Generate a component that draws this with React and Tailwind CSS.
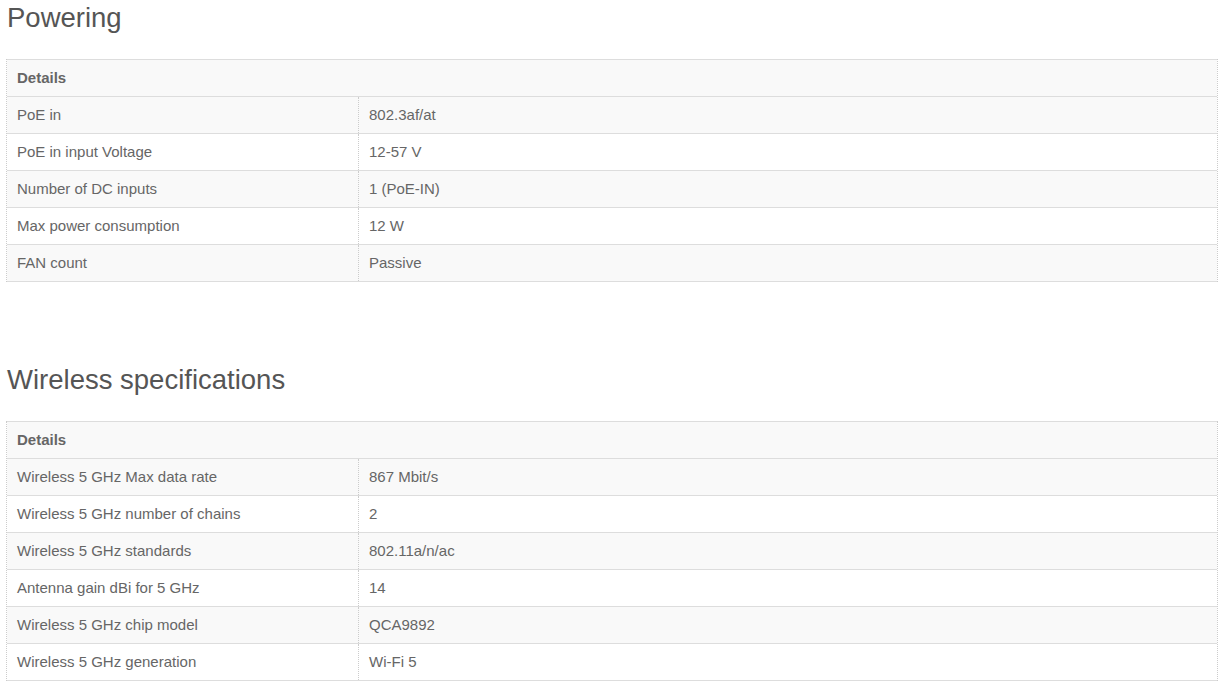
const powering = [
  ["PoE in", "802.3af/at"],
  ["PoE in input Voltage", "12-57 V"],
  ["Number of DC inputs", "1 (PoE-IN)"],
  ["Max power consumption", "12 W"],
  ["FAN count", "Passive"],
];

const wireless = [
  ["Wireless 5 GHz Max data rate", "867 Mbit/s"],
  ["Wireless 5 GHz number of chains", "2"],
  ["Wireless 5 GHz standards", "802.11a/n/ac"],
  ["Antenna gain dBi for 5 GHz", "14"],
  ["Wireless 5 GHz chip model", "QCA9892"],
  ["Wireless 5 GHz generation", "Wi-Fi 5"],
];

const SpecTable = ({ rows }) => {
  return (
    <div className="border-x border-dotted border-[#ccc]">
      <div className="h-[37px] flex items-center px-[10px] border-t border-[#ddd] bg-[#f9f9f9] font-bold">
        Details
      </div>
      {rows.map(([label, value], i) => (
        <div
          key={label}
          className={`flex h-[37px] border-t border-[#ddd] ${
            i % 2 === 0 ? "bg-[#f9f9f9]" : "bg-white"
          } ${i === rows.length - 1 ? "h-[38px] border-b" : ""}`}
        >
          <div className="w-[352px] flex items-center px-[10px] border-r border-dotted border-[#ccc]">
            {label}
          </div>
          <div className="flex-1 flex items-center px-[10px]">{value}</div>
        </div>
      ))}
    </div>
  );
};

const App = () => {
  return (
    <div
      className="bg-white min-h-screen pl-[6px] pr-[12px] text-[15px] text-[#666]"
      style={{ fontFamily: '"Liberation Sans", Arial, sans-serif' }}
    >
      <h2 className="text-[27.5px] leading-[36px] text-[#555] pl-px pb-[23px]">
        Powering
      </h2>
      <SpecTable rows={powering} />

      <h2 className="text-[27.5px] leading-[36px] text-[#555] pl-px pt-[80px] pb-[23px]">
        Wireless specifications
      </h2>
      <SpecTable rows={wireless} />
    </div>
  );
};

export default App;
